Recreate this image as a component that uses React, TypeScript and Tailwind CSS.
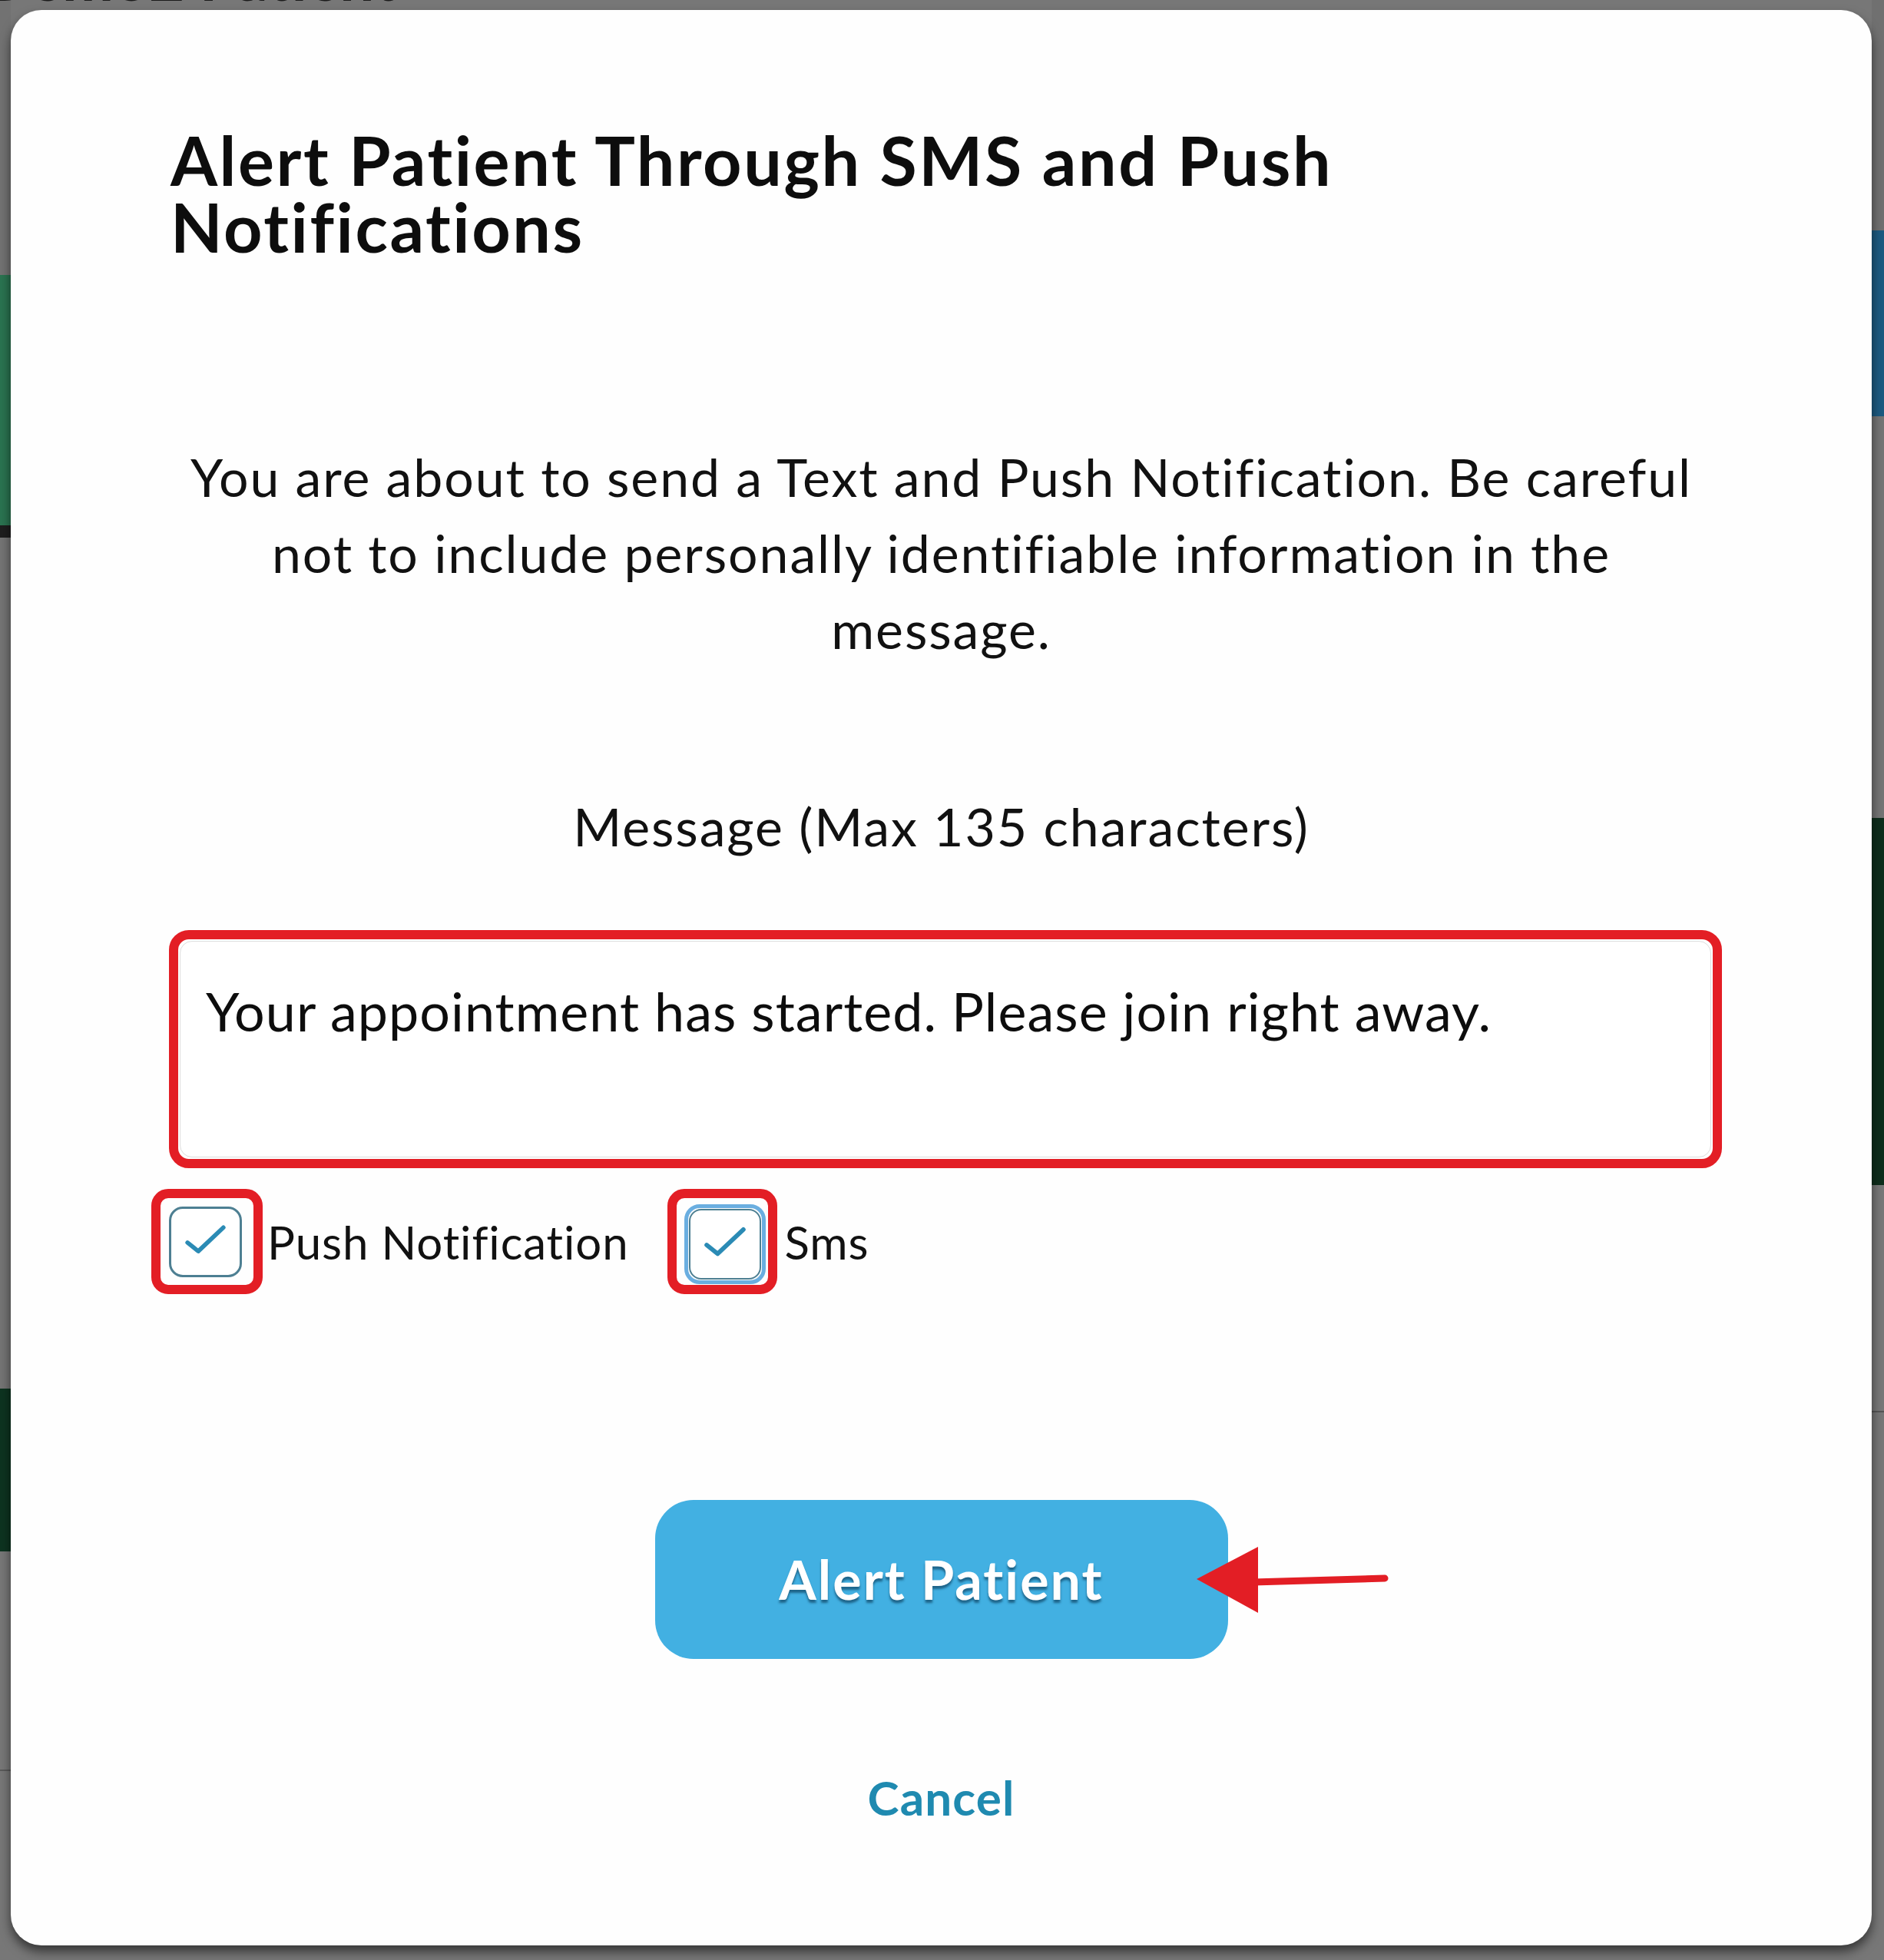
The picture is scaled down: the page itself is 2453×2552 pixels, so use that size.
import React from 'react';

const Check: React.FC = () => (
    <svg viewBox="0 0 94 92" className="w-full h-full">
        <path d="M22 47 L37 59 L72 26" fill="none" stroke="#2b8bb5" strokeWidth="6" strokeLinecap="round" strokeLinejoin="round" />
    </svg>
);

export default function App() {
    return (
        <div className="relative w-[2453px] h-[2552px] overflow-hidden bg-[#777777] font-['Lato','Noto_Sans',sans-serif] text-[#111111]">

            {/* PAGE BEHIND THE OVERLAY */}
            <div className="flex h-full justify-between">
                <div className="w-[14px] flex flex-col">
                    <div className="h-[358px] bg-[#727272]" />
                    <div className="h-[326px] bg-[#2a7350]" />
                    <div className="h-[16px] bg-[#1e1e1e]" />
                    <div className="h-[1108px] bg-[#747474]" />
                    <div className="h-[212px] bg-[#0d3320]" />
                    <div className="h-[284px] bg-[#777777]" />
                    <div className="h-[2px] bg-[#5a5a5a]" />
                </div>
                <div className="w-[16px] flex flex-col">
                    <div className="h-[300px] bg-[#707070]" />
                    <div className="h-[242px] bg-[#1c5a80]" />
                    <div className="h-[523px] bg-[#757575]" />
                    <div className="h-[478px] bg-[#0e2e1c]" />
                    <div className="h-[294px] bg-[#787878]" />
                    <div className="h-[2px] bg-[#555555]" />
                </div>
            </div>

            {/* PATIENT NAME PEEKING ABOVE THE MODAL */}
            <div className="absolute left-[-22px] top-[-70px] text-[80px] font-bold text-[#1a1a1a] leading-none">Demo2 Patient</div>

            {/* MODAL */}
            <div className="absolute left-[14px] top-[13px] w-[2423px] h-[2520px] bg-[#fefefe] rounded-[40px] shadow-[0_8px_14px_rgba(0,0,0,0.55)] flex flex-col items-center">

                <h1 className="self-stretch pl-[208px] pt-[152px] max-w-[1850px] text-[88px] leading-[87px] font-bold tracking-[0.029em] text-[#0d0d0d]">
                    Alert Patient Through SMS and Push Notifications
                </h1>

                <p className="mt-[232px] w-full px-[200px] text-center text-[68px] leading-[99px] tracking-[0.028em]">
                    You are about to send a Text and Push Notification. Be careful not to include personally identifiable information in the message.
                </p>

                <div className="mt-[158px] text-[68px] leading-[99px] tracking-[0.028em]">Message (Max 135 characters)</div>

                {/* MESSAGE BOX */}
                <div className="mt-[86px] self-start ml-[206px] w-[2022px] h-[310px] border-[12px] border-[#e31e25] rounded-[26px] p-[2px]">
                    <textarea
                        defaultValue="Your appointment has started. Please join right away."
                        className="w-full h-full resize-none outline-none border border-[#dddddd] rounded-[16px] pl-[33px] pt-[48px] text-[70px] leading-[84px] tracking-[0.015em] text-[#0d0d0d] bg-white"
                    />
                </div>

                {/* CHANNELS */}
                <div className="mt-[27px] self-start ml-[183px] flex items-center">
                    <div className="flex items-center gap-[6px]">
                        <div className="w-[145px] h-[137px] border-[12px] border-[#e31e25] rounded-[22px] pl-[11px] pt-[11px]">
                            <div className="w-[95px] h-[92px] border-[3px] border-[#4d7f92] rounded-[18px] bg-white">
                                <Check />
                            </div>
                        </div>
                        <span className="text-[60px] leading-none tracking-[0.015em]">Push Notification</span>
                    </div>
                    <div className="ml-[50px] flex items-center gap-[10px]">
                        <div className="w-[143px] h-[137px] border-[12px] border-[#e31e25] rounded-[22px] pl-[10px] pt-[8px]">
                            <div className="w-[106px] h-[104px] border-[5px] border-[#6aaee0] rounded-[20px] p-[1px]">
                                <div className="w-full h-full border-[2px] border-[#4d7f92] rounded-[16px] bg-white">
                                    <Check />
                                </div>
                            </div>
                        </div>
                        <span className="text-[60px] leading-none tracking-[0.015em]">Sms</span>
                    </div>
                </div>

                {/* ACTIONS */}
                <div className="relative mt-[268px]">
                    <button className="w-[746px] h-[207px] rounded-[50px] bg-[#42b0e2] text-white text-[70px] font-bold tracking-[0.029em] [text-shadow:0_4px_3px_rgba(10,60,90,0.65)]">
                        Alert Patient
                    </button>
                    <svg className="absolute left-[705px] top-[57px]" width="250" height="96" viewBox="0 0 250 96">
                        <polygon points="0,46 80,4 80,90" fill="#e31e25" />
                        <path d="M74 50 L245 45" stroke="#e31e25" strokeWidth="9" strokeLinecap="round" />
                    </svg>
                </div>

                <button className="mt-[134px] text-[62px] leading-[93px] font-bold tracking-[0.018em] text-[#1f8ab0]">Cancel</button>
            </div>
        </div>
    );
}
